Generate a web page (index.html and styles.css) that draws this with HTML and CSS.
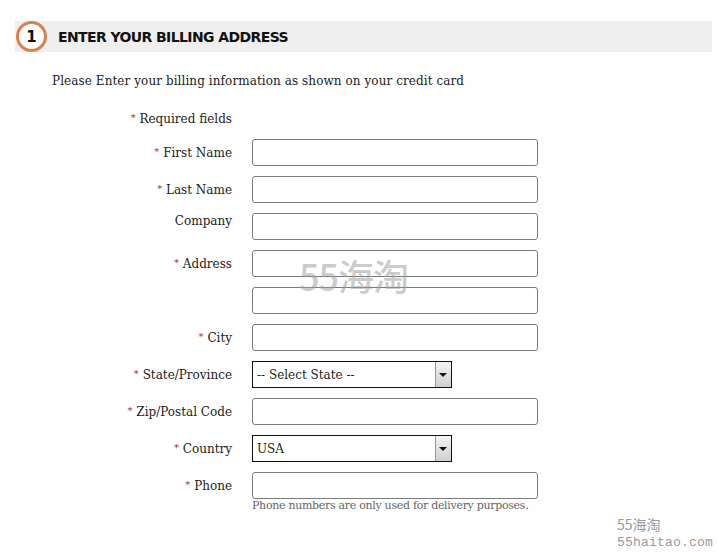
FILE: index.html
```html
<!DOCTYPE html>
<html>
<head>
<meta charset="utf-8">
<link rel="stylesheet" href="styles.css">
</head>
<body>
<div class="page">
  <div class="step-head">
    <span class="step-num">1</span>
    <h2 class="step-title">ENTER YOUR BILLING ADDRESS</h2>
  </div>
  <p class="intro">Please Enter your billing information as shown on your credit card</p>
  <form class="form">
    <div class="label req-note"><span class="ast">*</span> Required fields</div>
    <div class="spacer"></div>

    <label class="label"><span class="ast">*</span> First Name</label>
    <input class="field" type="text">

    <label class="label"><span class="ast">*</span> Last Name</label>
    <input class="field" type="text">

    <label class="label label-top">Company</label>
    <input class="field" type="text">

    <label class="label"><span class="ast">*</span> Address</label>
    <input class="field" type="text">

    <div class="label"></div>
    <input class="field" type="text">

    <label class="label"><span class="ast">*</span> City</label>
    <input class="field" type="text">

    <label class="label"><span class="ast">*</span> State/Province</label>
    <span class="select-wrap"><select class="select"><option>-- Select State --</option></select></span>

    <label class="label"><span class="ast">*</span> Zip/Postal Code</label>
    <input class="field" type="text">

    <label class="label"><span class="ast">*</span> Country</label>
    <span class="select-wrap"><select class="select"><option>USA</option></select></span>

    <label class="label label-phone"><span class="ast">*</span> Phone</label>
    <div class="phone-cell">
      <input class="field" type="text">
      <div class="hint">Phone numbers are only used for delivery purposes.</div>
    </div>
  </form>
  <div class="wm-center">55海淘</div>
  <div class="wm-corner">
    <div class="wm-cn">55海淘</div>
    <div class="wm-en">55haitao.com</div>
  </div>
</div>
</body>
</html>
```
FILE: styles.css
```css
html, body {
  margin: 0;
  padding: 0;
  background: #fefefe;
}
.page {
  position: relative;
  width: 717px;
  height: 553px;
  overflow: hidden;
  padding-top: 21px;
  box-sizing: border-box;
  font-family: "DejaVu Serif", "Liberation Serif", serif;
  color: #222;
}
.step-head {
  display: flex;
  align-items: center;
  height: 31px;
  margin: 0 5px 0 15px;
  background: #efefef;
}
.step-num {
  width: 25px;
  height: 25px;
  margin-left: 1px;
  border: 3px solid #d9814f;
  border-radius: 50%;
  background: #fff;
  display: flex;
  align-items: center;
  justify-content: center;
  font-family: "DejaVu Sans", sans-serif;
  font-weight: bold;
  font-size: 15px;
  color: #111;
}
.step-title {
  margin: 0 0 0 11px;
  font-family: "DejaVu Sans", sans-serif;
  font-weight: bold;
  font-size: 14px;
  letter-spacing: -0.6px;
  color: #111;
}
.intro {
  margin: 20px 0 0 52px;
  font-size: 12px;
  line-height: 18px;
  letter-spacing: 0.08px;
  color: #222;
}
.form {
  display: grid;
  grid-template-columns: 232px 286px;
  column-gap: 20px;
  row-gap: 10px;
  margin-top: 20px;
}
.label {
  text-align: right;
  align-self: center;
  font-size: 12px;
  line-height: 16px;
  color: #222;
}
.label-top {
  align-self: start;
}
.label-phone {
  align-self: start;
  margin-top: 5px;
}
.req-note {
  margin-bottom: 2px;
}
.ast {
  color: #a0303a;
  font-size: 10px;
  vertical-align: 2px;
}
.field {
  box-sizing: border-box;
  width: 286px;
  height: 27px;
  margin: 0;
  border: 1px solid #7a7a7a;
  border-radius: 3px;
  background: #fff;
  padding: 0 5px;
}
.select-wrap {
  position: relative;
  display: block;
  width: 200px;
  height: 27px;
}
.select-wrap::after {
  content: "";
  position: absolute;
  top: 1px;
  right: 1px;
  width: 16px;
  height: 25px;
  background: linear-gradient(#f4f4f4, #cfcfcf);
  border-left: 1px solid #999;
  box-sizing: border-box;
  pointer-events: none;
}
.select-wrap::before {
  content: "";
  position: absolute;
  z-index: 1;
  top: 12px;
  right: 5px;
  border-left: 4px solid transparent;
  border-right: 4px solid transparent;
  border-top: 4px solid #111;
  pointer-events: none;
}
.select {
  -webkit-appearance: none;
  appearance: none;
  box-sizing: border-box;
  width: 200px;
  height: 27px;
  margin: 0;
  border: 1px solid #111;
  border-radius: 0;
  background: #fff;
  padding: 0 0 0 4px;
  font-family: "DejaVu Serif", "Liberation Serif", serif;
  font-size: 12px;
  color: #222;
}
.phone-cell {
  display: flex;
  flex-direction: column;
}
.hint {
  margin-top: 0;
  font-size: 11px;
  line-height: 14px;
  color: #666;
  letter-spacing: -0.3px;
}
.wm-center {
  position: absolute;
  left: 299px;
  top: 253px;
  font-family: "Noto Sans CJK SC", "DejaVu Sans", sans-serif;
  font-weight: 500;
  font-size: 36px;
  color: rgba(160,160,160,0.55);
  line-height: 44px;
  letter-spacing: -1px;
}
.wm-corner {
  position: absolute;
  left: 617px;
  top: 514px;
  color: #9a9a9a;
}
.wm-cn {
  font-family: "Noto Sans CJK SC", sans-serif;
  font-size: 14px;
  line-height: 20px;
}
.wm-en {
  font-family: "Liberation Mono", monospace;
  font-size: 13px;
  line-height: 18px;
  letter-spacing: 0.2px;
}
```
